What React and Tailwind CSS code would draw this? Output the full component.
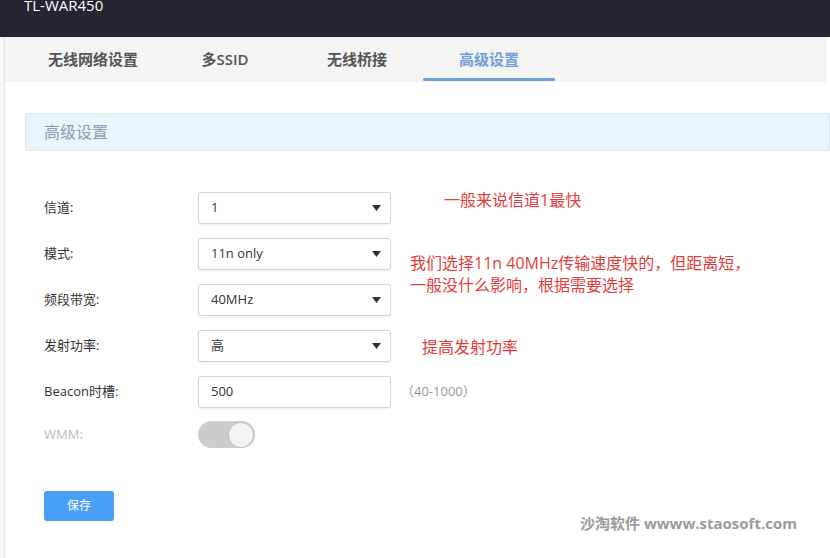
import React from 'react';

const tabs = ['无线网络设置', '多SSID', '无线桥接', '高级设置'];

function Select({ value }) {
  return (
    <div className="w-[193px] h-[32px] border border-[#d4d4d4] rounded-[3px] shadow-[0_1px_2px_rgba(0,0,0,0.08)] flex items-center justify-between pl-[12px] pr-[9px] text-[13px] text-[#333] bg-white">
      <span>{value}</span>
      <svg width="9" height="6" viewBox="0 0 9 6"><path d="M0 0h9L4.5 6z" fill="#333" /></svg>
    </div>
  );
}

function Row({ label, muted, children }) {
  return (
    <div className="flex items-center h-[32px]">
      <div className={`w-[154px] text-[13px] ${muted ? 'text-[#bbb]' : 'text-[#333]'}`}>{label}</div>
      {children}
    </div>
  );
}

export default function App() {
  return (
    <div className="w-[830px] h-[558px] bg-white overflow-hidden relative" style={{ fontFamily: '"Open Sans", "Noto Sans CJK SC", sans-serif' }}>
      {/* barra superior */}
      <div className="h-[37px] bg-[#26242f] px-[24px] flex items-start">
        <div className="text-white text-[15px] leading-[16px] -mt-[3px]">TL-WAR450</div>
      </div>

      <div className="flex h-[521px]">
        <div className="w-[5px] bg-[#f6f6f6] border-r border-[#e4e4e4] shrink-0" />
        <div className="flex-1">
          {/* tabs */}
          <div className="h-[45px] bg-[#f4f4f4] border-r border-[#e9e9e9] mr-[4px] flex pl-[22px]">
            {tabs.map((t, i) => (
              <div key={t} className="w-[132px] h-full relative flex items-center justify-center">
                <span className={`text-[15px] font-semibold ${i === 3 ? 'text-[#6f9fd6]' : 'text-[#555]'}`}>{t}</span>
                {i === 3 && <div className="absolute left-0 right-0 bottom-[1px] h-[3px] bg-[#6f9fd6] rounded-full" />}
              </div>
            ))}
          </div>

          {/* cabecera de sección */}
          <div className="mt-[31px] ml-[20px] h-[38px] bg-[#edf3fb] border border-[#dae5f1] rounded-l-[3px] flex items-center pl-[18px]">
            <span className="text-[16px] text-[#8a9cb2]">高级设置</span>
          </div>

          {/* formulario */}
          <div className="relative mt-[41px] ml-[39px] flex flex-col gap-[14px]">
            <Row label="信道:"><Select value="1" /></Row>
            <Row label="模式:"><Select value="11n only" /></Row>
            <Row label="频段带宽:"><Select value="40MHz" /></Row>
            <Row label="发射功率:"><Select value="高" /></Row>
            <Row label="Beacon时槽:">
              <div className="w-[193px] h-[32px] border border-[#d4d4d4] rounded-[3px] shadow-[0_1px_2px_rgba(0,0,0,0.08)] flex items-center pl-[12px] text-[13px] text-[#333]">500</div>
              <span className="ml-[10px] text-[13px] text-[#999]">（40-1000）</span>
            </Row>
            <div className="flex items-center h-[27px] -mt-[1px]">
              <div className="w-[154px] text-[13px] text-[#bbb]">WMM:</div>
              <div className="w-[57px] h-[27px] rounded-full bg-[#cdcdcd] flex items-center justify-end pr-[2px]">
                <div className="w-[24px] h-[24px] rounded-full bg-[#f4f4f4] shadow-[0_0_2px_rgba(0,0,0,0.2)]" />
              </div>
            </div>

            {/* anotaciones */}
            <div className="absolute left-[400px] top-[-4px] text-[16px] text-[#e23c3c]">一般来说信道1最快</div>
            <div className="absolute left-[366px] top-[60px] text-[16px] leading-[22px] text-[#e23c3c]">
              我们选择11n 40MHz传输速度快的，但距离短，<br />一般没什么影响，根据需要选择
            </div>
            <div className="absolute left-[378px] top-[143px] text-[16px] text-[#e23c3c]">提高发射功率</div>
          </div>

          <button className="mt-[43px] ml-[39px] w-[70px] h-[30px] rounded-[3px] bg-[#4a9ef6] text-white text-[12px]">保存</button>
        </div>
      </div>

      <div className="absolute left-[580px] top-[512px] text-[15px] font-bold text-[#9a9a9a]">沙淘软件 wwww.staosoft.com</div>
    </div>
  );
}
